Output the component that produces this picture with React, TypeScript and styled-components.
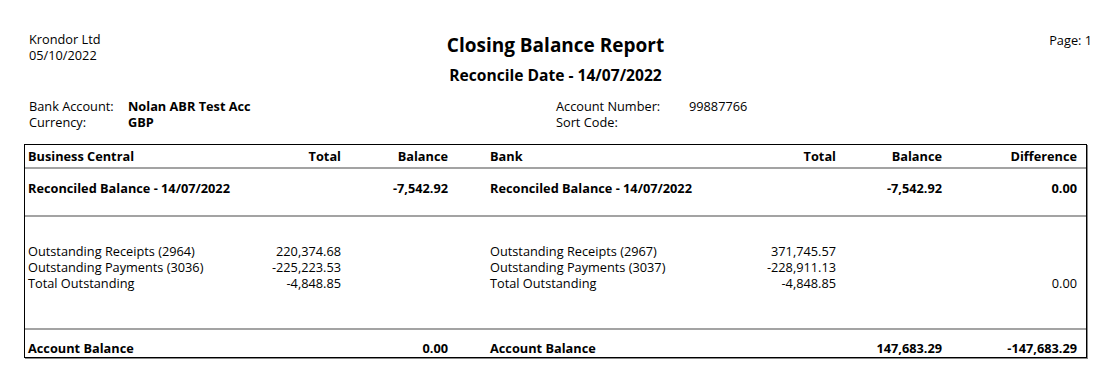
import React from "react"
import styled, { createGlobalStyle } from "styled-components"

const GlobalStyle = createGlobalStyle`
    body {
        margin: 0;
        background: #ffffff;
        font-family: "Open Sans", "Liberation Sans", sans-serif;
        color: #000000;
    }
`

type Cell = string | string[]

interface ReportRow {
    kind: "head" | "reconciled" | "outstanding" | "total"
    cells: Cell[]
}

const rows: ReportRow[] = [
    {
        kind: "head",
        cells: ["Business Central", "Total", "Balance", "Bank", "Total", "Balance", "Difference"]
    },
    {
        kind: "reconciled",
        cells: [
            "Reconciled Balance - 14/07/2022",
            "",
            "-7,542.92",
            "Reconciled Balance - 14/07/2022",
            "",
            "-7,542.92",
            "0.00"
        ]
    },
    {
        kind: "outstanding",
        cells: [
            ["Outstanding Receipts (2964)", "Outstanding Payments (3036)", "Total Outstanding"],
            ["220,374.68", "-225,223.53", "-4,848.85"],
            "",
            ["Outstanding Receipts (2967)", "Outstanding Payments (3037)", "Total Outstanding"],
            ["371,745.57", "-228,911.13", "-4,848.85"],
            "",
            ["", "", "0.00"]
        ]
    },
    {
        kind: "total",
        cells: ["Account Balance", "", "0.00", "Account Balance", "", "147,683.29", "-147,683.29"]
    }
]

// vertical padding per row kind, taken from the printed report
const rowPadding = {
    head: "3px 0",
    reconciled: "11px 0 19px",
    outstanding: "26px 0 37px",
    total: "10px 0 1px"
}

export default function App() {
    return (
        <>
            <GlobalStyle />
            <Page>
                <TopBar>
                    <Company>
                        <div>Krondor Ltd</div>
                        <div>05/10/2022</div>
                    </Company>
                    <TitleBlock>
                        <Title>Closing Balance Report</Title>
                        <SubTitle>Reconcile Date - 14/07/2022</SubTitle>
                    </TitleBlock>
                    <PageNo>Page: 1</PageNo>
                </TopBar>

                <InfoGrid>
                    <InfoLabel>Bank Account:</InfoLabel>
                    <InfoValue $bold>Nolan ABR Test Acc</InfoValue>
                    <InfoLabel>Account Number:</InfoLabel>
                    <InfoValue>99887766</InfoValue>
                    <InfoLabel>Currency:</InfoLabel>
                    <InfoValue $bold>GBP</InfoValue>
                    <InfoLabel>Sort Code:</InfoLabel>
                    <InfoValue />
                </InfoGrid>

                <Table>
                    {rows.map((row) => (
                        <Row key={row.kind} $pad={rowPadding[row.kind]} $divider={row.kind !== "head"}>
                            {row.cells.map((cell, i) => (
                                <Field
                                    key={i}
                                    $num={i !== 0 && i !== 3}
                                    $bankStart={i === 3}
                                    $bold={row.kind !== "outstanding"}
                                >
                                    {Array.isArray(cell)
                                        ? cell.map((line, j) => <Line key={j}>{line}</Line>)
                                        : cell}
                                </Field>
                            ))}
                        </Row>
                    ))}
                </Table>
            </Page>
        </>
    )
}

const Page = styled.div`
    width: 1116px;
    height: 370px;
    box-sizing: border-box;
    padding: 31px 0 0 24px;
    font-size: 12.75px;
    line-height: 16px;
`

const TopBar = styled.div`
    width: 1063px;
    display: grid;
    grid-template-columns: 1fr auto 1fr;
    align-items: start;
`

const Company = styled.div`
    padding: 0 0 0 5px;
`

const TitleBlock = styled.div`
    display: flex;
    flex-direction: column;
    align-items: center;
`

const Title = styled.div`
    font-size: 19px;
    font-weight: 700;
    line-height: 28px;
`

const SubTitle = styled.div`
    font-size: 15.6px;
    font-weight: 700;
    line-height: 20px;
    margin-top: 6px;
`

const PageNo = styled.div`
    justify-self: end;
    margin-right: -5px;
    padding-top: 1px;
`

const InfoGrid = styled.div`
    display: grid;
    grid-template-columns: 99px 428px 133px 1fr;
    padding: 13px 0 0 5px;
    width: 1058px;
`

const InfoLabel = styled.div``

const InfoValue = styled.div<{ $bold?: boolean }>`
    font-weight: ${({ $bold }) => ($bold ? 700 : 400)};
    min-height: 16px;
`

const Table = styled.div`
    margin-top: 14px;
    width: 1063px;
    box-sizing: border-box;
    border: 1px solid #000000;
    box-shadow: 1px 1px 0 #8a8a8a;
`

const Row = styled.div<{ $pad: string; $divider: boolean }>`
    display: grid;
    grid-template-columns: 223px 90px 107px 42px 257px 89px 106px 1fr;
    align-items: start;
    padding: ${({ $pad }) => $pad};
    padding-left: 3px;
    padding-right: 9px;
    border-top: ${({ $divider }) => ($divider ? "2px solid #a3a3a3" : "none")};
`

const Field = styled.div<{ $num: boolean; $bankStart: boolean; $bold: boolean }>`
    text-align: ${({ $num }) => ($num ? "right" : "left")};
    grid-column-start: ${({ $bankStart }) => ($bankStart ? 5 : "auto")};
    font-weight: ${({ $bold }) => ($bold ? 700 : 400)};
    white-space: nowrap;
`

const Line = styled.div`
    min-height: 16px;
`
